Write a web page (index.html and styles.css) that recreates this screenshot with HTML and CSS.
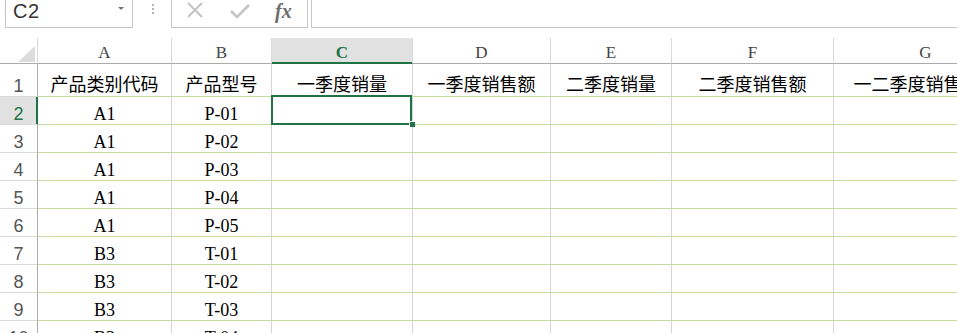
FILE: index.html
```html
<!DOCTYPE html>
<html>
<head>
    <title>Excel - 产品销量</title>
    <link rel="stylesheet" href="styles.css">
</head>
<body>
    <!-- Barra de fórmulas -->
    <div class="fbar">
        <div class="namebox">
            <span class="name">C2</span>
            <span class="drop"></span>
        </div>
        <div class="grip">
            <svg width="4" height="14" viewBox="0 0 4 14">
                <rect x="1" y="3" width="2" height="2" fill="#b4b4b4"/>
                <rect x="1" y="7" width="2" height="2" fill="#b4b4b4"/>
                <rect x="1" y="11" width="2" height="2" fill="#b4b4b4"/>
            </svg>
        </div>
        <div class="btns">
            <svg class="ico-x" width="18" height="20" viewBox="0 0 18 20">
                <path d="M2 3 L16 17 M16 3 L2 17" stroke="#c4c4c4" stroke-width="2" fill="none"/>
            </svg>
            <svg class="ico-ok" width="22" height="20" viewBox="0 0 22 20">
                <path d="M2 11 L8 17 L20 5" stroke="#c4c4c4" stroke-width="2.6" fill="none"/>
            </svg>
            <span class="fx">fx</span>
        </div>
        <div class="finput"></div>
    </div>

    <!-- Hoja -->
    <div class="sheet">
        <div class="row head">
            <div class="rh corner">
                <svg width="18" height="17" viewBox="0 0 18 17"><polygon points="17,0 17,16 0,16" fill="#dcdcdc"/></svg>
            </div>
            <div class="ch">A</div>
            <div class="ch">B</div>
            <div class="ch active">C</div>
            <div class="ch">D</div>
            <div class="ch">E</div>
            <div class="ch">F</div>
            <div class="ch">G</div>
        </div>
        <div class="row first">
            <div class="rh">1</div>
            <div class="c">产品类别代码</div>
            <div class="c">产品型号</div>
            <div class="c">一季度销量</div>
            <div class="c">一季度销售额</div>
            <div class="c">二季度销量</div>
            <div class="c">二季度销售额</div>
            <div class="c">一二季度销售总额</div>
        </div>
        <div class="row">
            <div class="rh active">2</div>
            <div class="c">A1</div>
            <div class="c">P-01</div>
            <div class="c sel"><span class="handle"></span></div>
            <div class="c"></div><div class="c"></div><div class="c"></div><div class="c"></div>
        </div>
        <div class="row">
            <div class="rh">3</div>
            <div class="c">A1</div>
            <div class="c">P-02</div>
            <div class="c"></div><div class="c"></div><div class="c"></div><div class="c"></div><div class="c"></div>
        </div>
        <div class="row">
            <div class="rh">4</div>
            <div class="c">A1</div>
            <div class="c">P-03</div>
            <div class="c"></div><div class="c"></div><div class="c"></div><div class="c"></div><div class="c"></div>
        </div>
        <div class="row">
            <div class="rh">5</div>
            <div class="c">A1</div>
            <div class="c">P-04</div>
            <div class="c"></div><div class="c"></div><div class="c"></div><div class="c"></div><div class="c"></div>
        </div>
        <div class="row">
            <div class="rh">6</div>
            <div class="c">A1</div>
            <div class="c">P-05</div>
            <div class="c"></div><div class="c"></div><div class="c"></div><div class="c"></div><div class="c"></div>
        </div>
        <div class="row">
            <div class="rh">7</div>
            <div class="c">B3</div>
            <div class="c">T-01</div>
            <div class="c"></div><div class="c"></div><div class="c"></div><div class="c"></div><div class="c"></div>
        </div>
        <div class="row">
            <div class="rh">8</div>
            <div class="c">B3</div>
            <div class="c">T-02</div>
            <div class="c"></div><div class="c"></div><div class="c"></div><div class="c"></div><div class="c"></div>
        </div>
        <div class="row">
            <div class="rh">9</div>
            <div class="c">B3</div>
            <div class="c">T-03</div>
            <div class="c"></div><div class="c"></div><div class="c"></div><div class="c"></div><div class="c"></div>
        </div>
        <div class="row">
            <div class="rh">10</div>
            <div class="c">B3</div>
            <div class="c">T-04</div>
            <div class="c"></div><div class="c"></div><div class="c"></div><div class="c"></div><div class="c"></div>
        </div>
    </div>
</body>
</html>
```

FILE: styles.css
```css
body {
    margin: 0;
    width: 957px;
    height: 333px;
    overflow: hidden;
    background: white;
    font-family: "Liberation Serif", "Noto Sans CJK SC", serif;
}

/* barra de fórmulas */
.fbar {
    display: flex;
    height: 28px;
}
.namebox, .btns, .finput {
    box-sizing: border-box;
    height: 28px;
    border: 1px solid #c6c6c6;
    border-top: none;
}
.namebox {
    margin-left: 5px;
    width: 128px;
    display: flex;
    align-items: flex-start;
}
.name {
    font-family: "Liberation Sans", sans-serif;
    font-size: 20px;
    line-height: 22px;
    letter-spacing: 0.5px;
    color: #333;
    padding: 0 0 0 7px;
}
.drop {
    margin: 7px 8px 0 auto;
    width: 0;
    height: 0;
    border-left: 3px solid transparent;
    border-right: 3px solid transparent;
    border-top: 3px solid #777;
}
.grip {
    width: 37px;
    display: flex;
    justify-content: center;
    padding-left: 1px;
    padding-top: 1px;
}
.btns {
    width: 137px;
    display: flex;
    align-items: flex-start;
}
.ico-x {
    margin-left: 14px;
}
.ico-ok {
    margin-left: 25px;
}
.fx {
    margin-left: 24px;
    font-family: "Liberation Serif", serif;
    font-style: italic;
    font-weight: bold;
    font-size: 20px;
    line-height: 22px;
    color: #6e6e6e;
}
.finput {
    flex: 1;
    margin-left: 3px;
    border-right: none;
}

/* hoja */
.sheet {
    margin-top: 10px;
}
.row {
    display: grid;
    grid-template-columns: 38px 134px 100px 141px 138px 121px 162px 184px;
    height: 28px;
}
.row > div {
    box-sizing: border-box;
    display: flex;
    align-items: flex-end;
    justify-content: center;
    white-space: nowrap;
    line-height: 20px;
}
.row.head {
    height: 26px;
}
.row.first {
    height: 33px;
}
.rh {
    font-family: "Liberation Sans", sans-serif;
    font-size: 18px;
    color: #555;
    border-right: 1px solid #ababab;
    border-bottom: 1px solid #dadada;
}
.rh.active {
    background: #e1e1e1;
    color: #217346;
    border-right-color: #217346;
    box-shadow: inset -1px 0 0 #217346;
}
.corner {
    border-right-color: #dadada;
    border-bottom: 1px solid #ababab;
    align-items: flex-start;
    justify-content: flex-start;
    padding: 4px 0 0 17px;
}
.ch {
    font-size: 17px;
    color: #444;
    border-right: 1px solid #dadada;
    border-bottom: 1px solid #ababab;
}
.ch.active {
    background: #e1e1e1;
    color: #217346;
    font-weight: bold;
    border-bottom-color: #217346;
    box-shadow: inset 0 -1px 0 #217346;
}
.c {
    font-size: 18px;
    color: #000;
    border-right: 1px solid #d4d4d4;
    border-bottom: 1px solid #c6d9a0;
}
.first .c {
    padding-bottom: 1px;
}
.c.sel {
    position: relative;
}
.c.sel::after {
    content: "";
    position: absolute;
    top: -2px;
    left: -1px;
    right: 0;
    bottom: -1px;
    border: 2px solid #217346;
}
.handle {
    position: absolute;
    right: -3px;
    bottom: -3px;
    width: 5px;
    height: 5px;
    background: #217346;
    border: 1px solid white;
    border-right: none;
    border-bottom: none;
    z-index: 2;
}
```
